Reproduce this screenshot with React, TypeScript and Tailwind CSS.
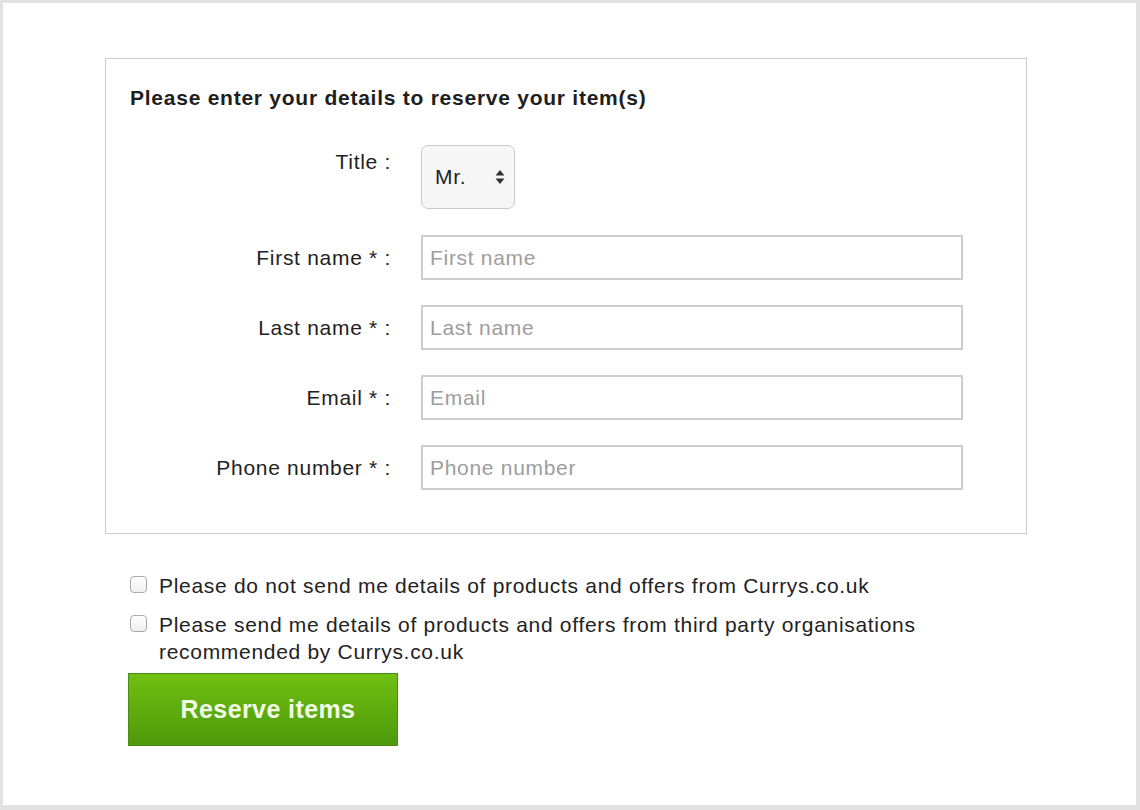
import React from "react";

const fields = [
  { label: "First name * :", placeholder: "First name" },
  { label: "Last name * :", placeholder: "Last name" },
  { label: "Email * :", placeholder: "Email" },
  { label: "Phone number * :", placeholder: "Phone number" },
];

function SelectArrows() {
  return (
    <svg width="10" height="16" viewBox="0 0 10 16" className="text-[#333]">
      <path d="M5 1 L9.5 6.5 H0.5 Z" fill="currentColor" />
      <path d="M5 15 L9.5 9.5 H0.5 Z" fill="currentColor" />
    </svg>
  );
}

export default function App() {
  return (
    <div
      className="w-[1140px] h-[810px] bg-white border-l-[3px] border-t-[3px] border-r-[4px] border-b-[5px] border-[#e2e2e2] pl-[102px] pt-[55px] text-[#222] tracking-[0.7px]"
      style={{ fontFamily: '"Liberation Sans", Arial, sans-serif' }}
    >
      {/* Details card */}
      <div className="w-[922px] h-[476px] border border-[#cfcfcf] pl-[24px] pt-[26px]">
        <h2 className="text-[21px] font-bold leading-[26px] text-[#1e1e1e] tracking-[0.75px]">
          Please enter your details to reserve your item(s)
        </h2>

        <div className="mt-[34px] flex">
          <div className="w-[261px] text-right text-[21px] pt-[1px]">Title :</div>
          <div className="ml-[30px] w-[94px] h-[64px] rounded-[7px] border border-[#c9c9c9] bg-[#f6f6f6] flex items-center justify-between pl-[13px] pr-[9px] text-[21px] text-[#222]">
            <span>Mr.</span>
            <SelectArrows />
          </div>
        </div>

        <div className="mt-[26px] flex flex-col gap-[25px]">
          {fields.map((f) => (
            <div key={f.label} className="flex items-center">
              <div className="w-[261px] text-right text-[21px]">{f.label}</div>
              <input
                placeholder={f.placeholder}
                className="ml-[30px] w-[542px] h-[45px] border-2 border-[#cdcdcd] bg-white px-[7px] text-[21px] tracking-[0.7px] placeholder:text-[#9d9d9d] outline-none"
              />
            </div>
          ))}
        </div>
      </div>

      {/* Marketing preferences */}
      <div className="pl-[25px] mt-[38px] text-[21px] leading-[27px] text-[#222]">
        <label className="flex items-start gap-[12px]">
          <span className="mt-[4px] w-[17px] h-[17px] rounded-[4px] border border-[#aaa] bg-gradient-to-b from-white to-[#f0f0f0] shrink-0" />
          <span>Please do not send me details of products and offers from Currys.co.uk</span>
        </label>
        <label className="flex items-start gap-[12px] mt-[12px]">
          <span className="mt-[4px] w-[17px] h-[17px] rounded-[4px] border border-[#aaa] bg-gradient-to-b from-white to-[#f0f0f0] shrink-0" />
          <span className="w-[780px]">
            Please send me details of products and offers from third party organisations recommended by Currys.co.uk
          </span>
        </label>

        <button className="mt-[8px] ml-[-2px] w-[270px] h-[73px] border border-[#4a8c12] bg-gradient-to-b from-[#70c012] to-[#4e990b] pl-[10px] text-[25px] font-bold tracking-[0.4px] text-[#f1fbe6]">
          Reserve items
        </button>
      </div>
    </div>
  );
}
